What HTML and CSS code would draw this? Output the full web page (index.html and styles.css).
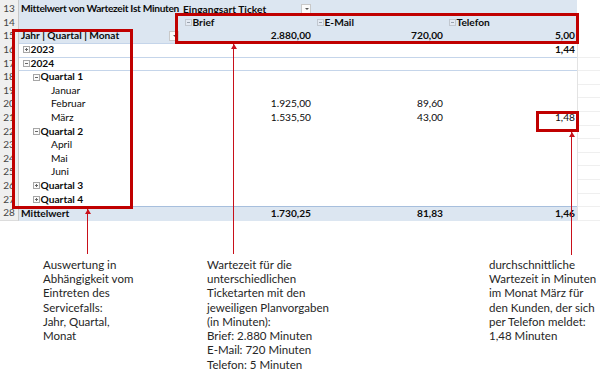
FILE: index.html
```html
<!DOCTYPE html>
<html lang="de">
<head>
<meta charset="utf-8">
<title>Pivot Wartezeit</title>
<link rel="stylesheet" href="styles.css">
</head>
<body>
<div class="page">
  <div class="sheet">
    <div class="row r13">
      <div class="rh">13</div>
      <div class="c blue b tight">Mittelwert von Wartezeit Ist Minuten</div>
      <div class="c blue b split"><span>Eingangsart Ticket</span><span class="dd"></span></div>
      <div class="c blue"></div>
      <div class="c blue"></div>
      <div class="c"></div>
    </div>
    <div class="row">
      <div class="rh">14</div>
      <div class="c blue"></div>
      <div class="c blue b hdr"><span class="tg minus light"></span>Brief</div>
      <div class="c blue b hdr"><span class="tg minus light"></span>E-Mail</div>
      <div class="c blue b hdr"><span class="tg minus light"></span>Telefon</div>
      <div class="c"></div>
    </div>
    <div class="row">
      <div class="rh">15</div>
      <div class="c blue b split ln">Jahr | Quartal | Monat<span class="dd"></span></div>
      <div class="c blue b num ln">2.880,00</div>
      <div class="c blue b num ln">720,00</div>
      <div class="c blue b num ln">5,00</div>
      <div class="c"></div>
    </div>
    <div class="row">
      <div class="rh">16</div>
      <div class="c b ln lv0"><span class="tg plus"></span>2023</div>
      <div class="c ln"></div>
      <div class="c ln"></div>
      <div class="c b num ln">1,44</div>
      <div class="c grid"></div>
    </div>
    <div class="row">
      <div class="rh">17</div>
      <div class="c b ln lv0"><span class="tg minus"></span>2024</div>
      <div class="c ln"></div>
      <div class="c ln"></div>
      <div class="c ln"></div>
      <div class="c grid"></div>
    </div>
    <div class="row">
      <div class="rh">18</div>
      <div class="c b lv1"><span class="tg minus"></span>Quartal 1</div>
      <div class="c"></div><div class="c"></div><div class="c"></div>
      <div class="c grid"></div>
    </div>
    <div class="row">
      <div class="rh">19</div>
      <div class="c lv2">Januar</div>
      <div class="c"></div><div class="c"></div><div class="c"></div>
      <div class="c grid"></div>
    </div>
    <div class="row">
      <div class="rh">20</div>
      <div class="c lv2">Februar</div>
      <div class="c num">1.925,00</div>
      <div class="c num">89,60</div>
      <div class="c"></div>
      <div class="c grid"></div>
    </div>
    <div class="row">
      <div class="rh">21</div>
      <div class="c lv2">März</div>
      <div class="c num">1.535,50</div>
      <div class="c num">43,00</div>
      <div class="c num">1,48</div>
      <div class="c grid"></div>
    </div>
    <div class="row">
      <div class="rh">22</div>
      <div class="c b lv1"><span class="tg minus"></span>Quartal 2</div>
      <div class="c"></div><div class="c"></div><div class="c"></div>
      <div class="c grid"></div>
    </div>
    <div class="row">
      <div class="rh">23</div>
      <div class="c lv2">April</div>
      <div class="c"></div><div class="c"></div><div class="c"></div>
      <div class="c grid"></div>
    </div>
    <div class="row">
      <div class="rh">24</div>
      <div class="c lv2">Mai</div>
      <div class="c"></div><div class="c"></div><div class="c"></div>
      <div class="c grid"></div>
    </div>
    <div class="row">
      <div class="rh">25</div>
      <div class="c lv2">Juni</div>
      <div class="c"></div><div class="c"></div><div class="c"></div>
      <div class="c grid"></div>
    </div>
    <div class="row">
      <div class="rh">26</div>
      <div class="c b lv1"><span class="tg plus"></span>Quartal 3</div>
      <div class="c"></div><div class="c"></div><div class="c"></div>
      <div class="c grid"></div>
    </div>
    <div class="row">
      <div class="rh">27</div>
      <div class="c b lv1"><span class="tg plus"></span>Quartal 4</div>
      <div class="c"></div><div class="c"></div><div class="c"></div>
      <div class="c grid"></div>
    </div>
    <div class="row">
      <div class="rh">28</div>
      <div class="c blue b tot">Mittelwert</div>
      <div class="c blue b num tot">1.730,25</div>
      <div class="c blue b num tot">81,83</div>
      <div class="c blue b num tot">1,46</div>
      <div class="c grid"></div>
    </div>
  </div>

  <div class="notes">
    <p>Auswertung in<br>Abhängigkeit vom<br>Eintreten des<br>Servicefalls:<br>Jahr, Quartal,<br>Monat</p>
    <p>Wartezeit für die<br>unterschiedlichen<br>Ticketarten mit den<br>jeweiligen Planvorgaben<br>(in Minuten):<br>Brief: 2.880 Minuten<br>E-Mail: 720 Minuten<br>Telefon: 5 Minuten</p>
    <p>durchschnittliche<br>Wartezeit in Minuten<br>im Monat März für<br>den Kunden, der sich<br>per Telefon meldet:<br>1,48 Minuten</p>
  </div>

  <div class="mark mark-rows"></div>
  <div class="mark mark-cols"></div>
  <div class="mark mark-cell"></div>
  <div class="arrow arrow-rows"></div>
  <div class="arrow arrow-cols"></div>
  <div class="arrow arrow-cell"></div>
</div>
</body>
</html>
```
FILE: styles.css
```css
* { box-sizing: border-box; }

body {
  margin: 0;
  width: 600px;
  height: 379px;
  overflow: hidden;
  background: #fff;
  font-family: Lato, "Open Sans", sans-serif;
}

.page {
  position: relative;
  width: 600px;
  height: 379px;
}

.sheet {
  display: flex;
  flex-direction: column;
}

.row {
  display: grid;
  grid-template-columns: 19px 162px 132px 132px 132px 23px;
  height: 13.6px;
  font-size: 10.2px;
  line-height: 13.6px;
  color: #0c0c0c;
}

.r13 { height: 15.8px; }
.r13 > div { padding-top: 2px; }

.rh {
  background: #efefef;
  border-right: 1px solid #c8c8c8;
  border-bottom: 1px solid #dcdcdc;
  color: #454545;
  text-align: center;
  font-size: 10px;
}

.c {
  padding: 0 2px;
  white-space: nowrap;
  overflow: hidden;
}

.tight { letter-spacing: -0.32px; padding-right: 0; }

.num { text-align: right; }
.b { font-weight: 700; }
.blue { background: #dce6f1; }
.ln { border-bottom: 1px solid #c5d5ea; }
.tot { border-top: 1px solid #a7bfdd; }
.grid { border-left: 1px solid #e3e3e3; border-bottom: 1px solid #efefef; }

.split {
  display: flex;
  justify-content: space-between;
  align-items: center;
}

.hdr { padding-left: 4px; }
.lv0 { padding-left: 4px; }
.lv1 { padding-left: 14px; }
.lv2 { padding-left: 32px; }

.dd {
  position: relative;
  width: 10px;
  height: 10px;
  border: 1px solid #c9c9c9;
  background: #fbfbfb;
  flex: none;
}
.dd::after {
  content: "";
  position: absolute;
  left: 2.5px;
  top: 3px;
  border-left: 2px solid transparent;
  border-right: 2px solid transparent;
  border-top: 2.5px solid #555;
}

.tg {
  position: relative;
  display: inline-block;
  width: 7px;
  height: 7px;
  margin-right: 0.5px;
  border: 1px solid #a6a6a6;
  background: #fafafa;
  vertical-align: -0.5px;
}
.tg::before {
  content: "";
  position: absolute;
  left: 1px;
  top: 2px;
  width: 3px;
  height: 1px;
  background: #666;
}
.tg.plus::after {
  content: "";
  position: absolute;
  left: 2px;
  top: 1px;
  width: 1px;
  height: 3px;
  background: #666;
}
.tg.light { border-color: #c2c8d0; background: #e4eaf3; }
.tg.light::before { background: #9aa3ae; }

.notes {
  display: grid;
  grid-template-columns: 164px 282px 1fr;
  padding-left: 43px;
  margin-top: 38px;
  font-size: 11.5px;
  line-height: 14.3px;
  color: #262626;
}
.notes p { margin: 0; }

.mark {
  position: absolute;
  border: 3px solid #c00000;
}
.mark-rows { left: 12px; top: 29px; width: 121px; height: 180px; }
.mark-cols { left: 175px; top: 13px; width: 404px; height: 31px; }
.mark-cell { left: 536px; top: 111px; width: 43px; height: 21px; }

.arrow {
  position: absolute;
  width: 1px;
  background: #c8101a;
}
.arrow::before {
  content: "";
  position: absolute;
  left: -2.5px;
  top: 0;
  border-left: 3px solid transparent;
  border-right: 3px solid transparent;
  border-bottom: 5px solid #c8101a;
}
.arrow-rows { left: 87px; top: 209px; height: 45px; }
.arrow-cols { left: 233px; top: 44px; height: 210px; }
.arrow-cell { left: 571px; top: 132px; height: 123px; }
```
